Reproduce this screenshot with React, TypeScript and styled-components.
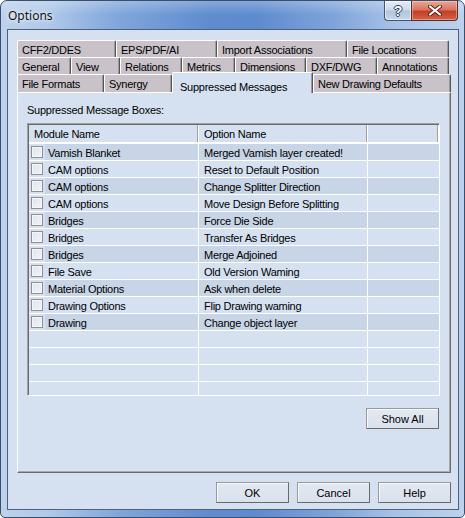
import React from "react";
import styled, { createGlobalStyle, css } from "styled-components";

const PANEL = "#d5e1f1";
const DARK_ROW = "#c8d5e6";
const TAB_BG = "#c9c2c9";

const GlobalStyle = createGlobalStyle`
  html, body { margin: 0; padding: 0; background: #ffffff; }
  body {
    font-family: "Liberation Sans", Arial, sans-serif;
    font-size: 11px;
    letter-spacing: -0.25px;
    color: #000;
  }
  *, *::before, *::after { box-sizing: border-box; }
`;

const Window = styled.div`
  width: 465px;
  height: 518px;
  display: flex;
  flex-direction: column;
  border: 1px solid #3b4e69;
  border-radius: 7px 7px 5px 5px;
  padding: 0 5px 7px 6px;
  overflow: hidden;
  background:
    linear-gradient(180deg, rgba(255,255,255,0.25) 0px, rgba(255,255,255,0) 14px),
    linear-gradient(90deg, #bcd2ed 0%, #b0c9ea 10%, #80a7db 25%, #5f8ccf 45%, #5d8bcf 55%, #7fa4da 72%, #a6c2e7 85%, #bcd2ed 100%);
`;

const TitleBar = styled.div`
  height: 28px;
  flex: none;
  display: flex;
  align-items: center;
`;

const Title = styled.div`
  padding-left: 1px;
  font-family: "Segoe UI", "Noto Sans", "Liberation Sans", sans-serif;
  font-size: 12px;
  letter-spacing: 0;
  color: #111;
  text-shadow: 0 0 6px rgba(255,255,255,0.9), 0 0 3px rgba(255,255,255,0.8);
`;

const CaptionButtons = styled.div`
  margin-left: auto;
  margin-right: 1px;
  align-self: flex-start;
  display: flex;
`;

const HelpButton = styled.div`
  width: 27px;
  height: 20px;
  display: flex;
  align-items: center;
  justify-content: center;
  border: 1px solid #44546c;
  border-top: none;
  border-right: none;
  border-radius: 0 0 0 4px;
  background: linear-gradient(180deg, #e6edf6 0%, #ccd9ea 48%, #b2c4dc 52%, #c8d6e8 100%);
  box-shadow: inset 0 0 0 1px rgba(255,255,255,0.55);
  font-family: "Liberation Sans", Arial, sans-serif;
  font-weight: bold;
  font-size: 14px;
  color: #fff;
  text-shadow: 1px 0 0 #2c3f5c, -1px 0 0 #2c3f5c, 0 1px 0 #2c3f5c, 0 -1px 0 #2c3f5c;
`;

const CloseButton = styled.div`
  width: 47px;
  height: 20px;
  display: flex;
  align-items: center;
  justify-content: center;
  border: 1px solid #5a2a24;
  border-top: none;
  border-radius: 0 0 4px 0;
  background: linear-gradient(180deg, #e9a897 0%, #d87560 45%, #c63f26 55%, #d2624a 100%);
  box-shadow: inset 0 0 0 1px rgba(255,220,210,0.45);
`;

const Client = styled.div`
  flex: 1;
  display: flex;
  flex-direction: column;
  border: 1px solid #4f6079;
  background: ${PANEL};
  padding: 10px 7px 6px 9px;
`;

const TabStrip = styled.div`
  display: flex;
  flex-direction: column;
  flex: none;
`;

const TabRow = styled.div<{ $h: number }>`
  display: flex;
  height: ${(p) => p.$h}px;
  line-height: ${(p) => p.$h + 1}px;
`;

const Tab = styled.div<{ $w: number; $active?: boolean }>`
  width: ${(p) => p.$w}px;
  flex: none;
  white-space: nowrap;
  overflow: hidden;
  border-top: 1px solid #ffffff;
  border-left: 1px solid #ffffff;
  border-right: 1px solid #555555;
  box-shadow: inset -1px 0 0 #9c9c9c;
  border-radius: 2px 2px 0 0;
  background: ${TAB_BG};
  padding-left: 4px;
  ${(p) =>
    p.$active &&
    css`
      position: relative;
      z-index: 1;
      margin-top: -2px;
      margin-bottom: -1px;
      background: ${PANEL};
      padding-left: 7px;
      padding-top: 8px;
      line-height: 13px;
    `}
`;

const Panel = styled.div`
  flex: 1;
  display: flex;
  flex-direction: column;
  border-style: solid;
  border-width: 1px;
  border-color: #ffffff #6c6c6c #6c6c6c #ffffff;
  box-shadow: inset -1px -1px 0 #a9a9a9;
  padding: 11px 10px 0 9px;
`;

const Label = styled.div`
  line-height: 13px;
`;

const List = styled.div`
  margin-top: 6px;
  height: 273px;
  overflow: hidden;
  border-style: solid;
  border-width: 1px;
  border-color: #a0a0a0 #ffffff #ffffff #a0a0a0;
  padding: 1px 0 0 1px;
  box-shadow: inset 1px 1px 0 #6a6a6a;
`;

const HeaderRow = styled.div`
  display: grid;
  grid-template-columns: 170px 169px 71px;
  height: 18px;
  border-bottom: 1px solid #ffffff;
`;

const HeaderCell = styled.div`
  padding-left: 5px;
  line-height: 19px;
  white-space: nowrap;
  overflow: hidden;
  border-right: 1px solid #ffffff;
  box-shadow: inset -1px 0 0 #a0a0a0;
`;

const Row = styled.div`
  display: grid;
  grid-template-columns: 16px 154px 169px 71px;
  height: 17px;
  border-top: 1px solid #ffffff;
`;

const CheckCell = styled.div`
  display: flex;
  align-items: center;
  padding-left: 2px;
`;

const Checkbox = styled.div`
  width: 12px;
  height: 12px;
  border: 1px solid #8e8f8f;
  background: linear-gradient(135deg, #dfe5ee 0%, #f1f4f8 100%);
  box-shadow: inset 0 0 0 1px #f5f7fa;
`;

const Cell = styled.div<{ $dark?: boolean; $pad: number; $last?: boolean }>`
  padding-left: ${(p) => p.$pad}px;
  line-height: 18px;
  white-space: nowrap;
  overflow: hidden;
  background: ${(p) => (p.$dark ? DARK_ROW : "transparent")};
  border-right: ${(p) => (p.$last ? "none" : "1px solid #ffffff")};
`;

const PanelFooter = styled.div`
  display: flex;
  justify-content: flex-end;
  margin-top: 12px;
  padding-right: 1px;
`;

const Button = styled.div`
  width: 73px;
  height: 21px;
  display: flex;
  align-items: center;
  justify-content: center;
  padding-top: 1px;
  border-style: solid;
  border-width: 1px;
  border-color: #9a9a9a #6a6a6a #6a6a6a #9a9a9a;
  background: linear-gradient(180deg, #e3e9f2 0%, #d9e1ed 100%);
  box-shadow: inset 1px 1px 0 #f6f8fb;
  letter-spacing: 0;
`;

const DialogButtons = styled.div`
  display: flex;
  justify-content: flex-end;
  gap: 8px;
  margin-top: 9px;
  flex: none;
`;

type TabDef = { label: string; w: number; active?: boolean };

const tabRows: { h: number; tabs: TabDef[] }[] = [
  {
    h: 17,
    tabs: [
      { label: "CFF2/DDES", w: 99 },
      { label: "EPS/PDF/AI", w: 101 },
      { label: "Import Associations", w: 130 },
      { label: "File Locations", w: 102 },
    ],
  },
  {
    h: 17,
    tabs: [
      { label: "General", w: 54 },
      { label: "View", w: 49 },
      { label: "Relations", w: 62 },
      { label: "Metrics", w: 53 },
      { label: "Dimensions", w: 71 },
      { label: "DXF/DWG", w: 71 },
      { label: "Annotations", w: 72 },
    ],
  },
  {
    h: 18,
    tabs: [
      { label: "File Formats", w: 87 },
      { label: "Synergy", w: 68 },
      { label: "Suppressed Messages", w: 141, active: true },
      { label: "New Drawing Defaults", w: 138 },
    ],
  },
];

const messages: [string, string][] = [
  ["Vamish Blanket", "Merged Vamish layer created!"],
  ["CAM options", "Reset to Default Position"],
  ["CAM options", "Change Splitter Direction"],
  ["CAM options", "Move Design Before Splitting"],
  ["Bridges", "Force Die Side"],
  ["Bridges", "Transfer As Bridges"],
  ["Bridges", "Merge Adjoined"],
  ["File Save", "Old Version Waming"],
  ["Material Options", "Ask when delete"],
  ["Drawing Options", "Flip Drawing waming"],
  ["Drawing", "Change object layer"],
];

const CloseGlyph = () => (
  <svg width="14" height="11" viewBox="0 0 14 11">
    <path d="M2 1.5 L12 9.5 M12 1.5 L2 9.5" stroke="#5a1d14" strokeWidth="4" strokeLinecap="round" fill="none" />
    <path d="M2 1.5 L12 9.5 M12 1.5 L2 9.5" stroke="#ffffff" strokeWidth="2.2" strokeLinecap="round" fill="none" />
  </svg>
);

export default function App() {
  return (
    <>
      <GlobalStyle />
      <Window>
        <TitleBar>
          <Title>Options</Title>
          <CaptionButtons>
            <HelpButton>?</HelpButton>
            <CloseButton>
              <CloseGlyph />
            </CloseButton>
          </CaptionButtons>
        </TitleBar>
        <Client>
          <TabStrip>
            {tabRows.map((row, i) => (
              <TabRow key={i} $h={row.h}>
                {row.tabs.map((t) => (
                  <Tab key={t.label} $w={t.w} $active={t.active}>
                    {t.label}
                  </Tab>
                ))}
              </TabRow>
            ))}
          </TabStrip>
          <Panel>
            <Label>Suppressed Message Boxes:</Label>
            <List>
              <HeaderRow>
                <HeaderCell>Module Name</HeaderCell>
                <HeaderCell>Option Name</HeaderCell>
                <HeaderCell />
              </HeaderRow>
              {messages.map(([mod, opt], i) => {
                const dark = i % 2 === 0;
                return (
                  <Row key={i}>
                    <CheckCell>
                      <Checkbox />
                    </CheckCell>
                    <Cell $dark={dark} $pad={3}>{mod}</Cell>
                    <Cell $dark={dark} $pad={5}>{opt}</Cell>
                    <Cell $dark={dark} $pad={0} $last />
                  </Row>
                );
              })}
              {Array.from({ length: 5 }).map((_, i) => (
                <Row key={`e${i}`}>
                  <CheckCell />
                  <Cell $pad={3} />
                  <Cell $pad={5} />
                  <Cell $pad={0} $last />
                </Row>
              ))}
            </List>
            <PanelFooter>
              <Button>Show All</Button>
            </PanelFooter>
          </Panel>
          <DialogButtons>
            <Button>OK</Button>
            <Button>Cancel</Button>
            <Button>Help</Button>
          </DialogButtons>
        </Client>
      </Window>
    </>
  );
}
